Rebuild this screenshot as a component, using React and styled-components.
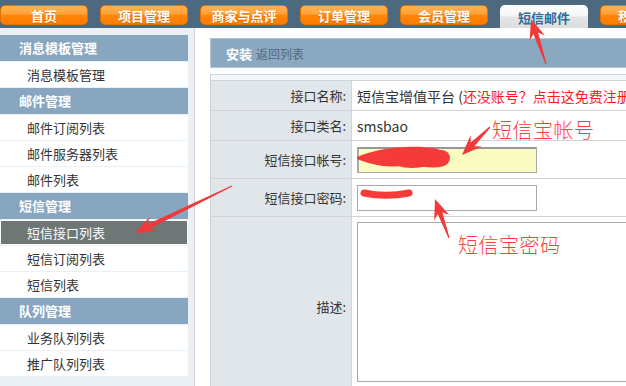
import styled, { createGlobalStyle } from "styled-components";

const GlobalStyle = createGlobalStyle`
  html, body { margin: 0; padding: 0; }
  body {
    font-family: "Noto Sans CJK SC", "Noto Sans", sans-serif;
    font-size: 13px;
    color: #333;
    background: #fff;
  }
`;

const Page = styled.div`
  position: relative;
  width: 626px;
  height: 386px;
  overflow: hidden;
  display: flex;
  flex-direction: column;
`;

const TopBar = styled.div`
  flex: none;
  height: 28px;
  box-sizing: border-box;
  padding-top: 5px;
  background: #4d697f;
  display: flex;
  align-items: flex-start;
  gap: 12px;
`;

const Tab = styled.div`
  flex: none;
  width: 88px;
  height: ${(p) => (p.$active ? "23px" : "20px")};
  box-sizing: border-box;
  border-radius: ${(p) => (p.$active ? "5px 5px 0 0" : "5px")};
  display: flex;
  align-items: center;
  justify-content: center;
  padding-top: ${(p) => (p.$active ? "2px" : "0")};
  font-size: 13px;
  font-weight: bold;
  color: ${(p) => (p.$active ? "#2d6c9c" : "#fff")};
  text-shadow: ${(p) => (p.$active ? "none" : "0 1px 1px rgba(150,60,0,0.35)")};
  background: ${(p) =>
    p.$active
      ? "linear-gradient(#ffffff 0%, #f6f6f6 45%, #e4e4e4 55%, #dedede 100%)"
      : "linear-gradient(#ffb250 0%, #ffa23a 45%, #ff8506 52%, #ff7c00 100%)"};
  border: ${(p) => (p.$active ? "none" : "1px solid #e37300")};
`;

const Main = styled.div`
  flex: 1;
  display: flex;
  min-height: 0;
`;

const Sidebar = styled.div`
  flex: none;
  width: 188px;
  padding: 7px 6px 0 0;
  background: #ebf0f5;
  border-right: 1px solid #cdd3d9;
`;

const Group = styled.div`
  margin-bottom: 1px;
`;

const GroupTitle = styled.div`
  height: 26px;
  line-height: 26px;
  padding-left: 19px;
  background: #88a6bf;
  color: #fff;
  font-weight: bold;
  font-size: 13px;
`;

const Item = styled.div`
  margin-top: 1px;
  height: 25px;
  box-sizing: border-box;
  line-height: 23px;
  padding-left: 26px;
  border: 1px solid #fff;
  background: ${(p) => (p.$active ? "#6e7676" : "#fff")};
  color: ${(p) => (p.$active ? "#fff" : "#333")};
  font-size: 13px;
`;

const Content = styled.div`
  flex: 1;
  min-width: 0;
  padding: 10px 0 0 15px;
  background: #fff;
`;

const Panel = styled.div`
  width: 520px;
`;

const PanelHeader = styled.div`
  height: 30px;
  box-sizing: border-box;
  border: 1px solid #b8c4ce;
  background: #8aa8c0;
  display: flex;
  align-items: center;
  gap: 4px;
  padding-left: 15px;
`;

const HeaderTitle = styled.span`
  color: #fff;
  font-weight: bold;
  font-size: 13px;
`;

const HeaderLink = styled.span`
  color: #4f6a82;
  font-size: 12px;
`;

const Table = styled.div`
  margin-top: 6px;
  border: 1px solid #cfd4d8;
  border-bottom: none;
`;

const TopStrip = styled.div`
  height: 5px;
  background: #f4f6f8;
  border-bottom: 1px solid #cfd4d8;
`;

const Row = styled.div`
  display: grid;
  grid-template-columns: 141px 1fr;
  box-sizing: border-box;
  height: ${(p) => p.$h}px;
  border-bottom: 1px solid #d0d4d8;
`;

const Label = styled.div`
  background: #e1e6eb;
  border-right: 1px solid #cfd4d8;
  display: flex;
  align-items: center;
  justify-content: flex-end;
  padding-right: 5px;
  font-size: 13px;
  color: #333;
`;

const Value = styled.div`
  display: flex;
  align-items: ${(p) => (p.$top ? "flex-start" : "center")};
  padding-left: 5px;
  white-space: nowrap;
  font-size: 14px;
  color: #333;
`;

const Warn = styled.span`
  color: #ff1a1a;
`;

const Field = styled.input`
  width: 180px;
  height: 26px;
  box-sizing: border-box;
  margin: 0;
  border: 1px solid #a9a9a9;
  border-top-width: ${(p) => (p.$focus ? "2px" : "1px")};
  border-left-width: ${(p) => (p.$focus ? "2px" : "1px")};
  border-top-color: ${(p) => (p.$focus ? "#999" : "#a9a9a9")};
  background: ${(p) => (p.$focus ? "#fafcc2" : "#fff")};
  outline: none;
`;

const Memo = styled.textarea`
  width: 300px;
  height: 160px;
  box-sizing: border-box;
  margin: 5px 0 0;
  border: 1px solid #aaa;
  resize: none;
  outline: none;
`;

const Overlay = styled.svg`
  position: absolute;
  left: 0;
  top: 0;
  pointer-events: none;
`;

const Note = styled.div`
  position: absolute;
  left: ${(p) => p.$x}px;
  top: ${(p) => p.$y}px;
  color: #ff3d3d;
  font-size: 20px;
  font-weight: 300;
  letter-spacing: 0.5px;
  line-height: 1;
  white-space: nowrap;
`;

const tabs = ["首页", "项目管理", "商家与点评", "订单管理", "会员管理", "短信邮件", "积分管理"];

const groups = [
  { title: "消息模板管理", items: ["消息模板管理"] },
  { title: "邮件管理", items: ["邮件订阅列表", "邮件服务器列表", "邮件列表"] },
  { title: "短信管理", items: ["短信接口列表", "短信订阅列表", "短信列表"], active: 0 },
  { title: "队列管理", items: ["业务队列列表", "推广队列列表"] },
];

// tapered screenshot-style arrow, tail -> tip
function arrow(x1, y1, x2, y2, head = 16, len = 20) {
  const dx = x2 - x1;
  const dy = y2 - y1;
  const l = Math.hypot(dx, dy);
  const ux = dx / l;
  const uy = dy / l;
  const nx = -uy;
  const ny = ux;
  const pt = (d, w) => [x2 - ux * d + nx * w, y2 - uy * d + ny * w];
  const pts = [
    [x1 + nx * 0.5, y1 + ny * 0.5],
    pt(len * 0.75, 2.5),
    pt(len, head / 2),
    [x2, y2],
    pt(len, -head / 2),
    pt(len * 0.75, -2.5),
    [x1 - nx * 0.5, y1 - ny * 0.5],
  ];
  return pts.map((p) => p.map((v) => v.toFixed(1)).join(",")).join(" ");
}

const arrows = [
  [232, 186, 135, 233],
  [546, 64, 531, 19],
  [490, 127, 462, 155],
  [449, 238, 435, 199],
];

export default function App() {
  return (
    <Page>
      <GlobalStyle />
      <TopBar>
        {tabs.map((t, i) => (
          <Tab key={t} $active={i === 5}>
            {t}
          </Tab>
        ))}
      </TopBar>
      <Main>
        <Sidebar>
          {groups.map((g) => (
            <Group key={g.title}>
              <GroupTitle>{g.title}</GroupTitle>
              {g.items.map((it, i) => (
                <Item key={it} $active={g.active === i}>
                  {it}
                </Item>
              ))}
            </Group>
          ))}
        </Sidebar>
        <Content>
          <Panel>
            <PanelHeader>
              <HeaderTitle>安装</HeaderTitle>
              <HeaderLink>返回列表</HeaderLink>
            </PanelHeader>
            <Table>
              <TopStrip />
              <Row $h={30}>
                <Label>接口名称:</Label>
                <Value>
                  短信宝增值平台 (<Warn>还没账号？点击这免费注册</Warn>)
                </Value>
              </Row>
              <Row $h={30}>
                <Label>接口类名:</Label>
                <Value>smsbao</Value>
              </Row>
              <Row $h={38}>
                <Label>短信接口帐号:</Label>
                <Value>
                  <Field $focus readOnly />
                </Value>
              </Row>
              <Row $h={38}>
                <Label>短信接口密码:</Label>
                <Value>
                  <Field readOnly />
                </Value>
              </Row>
              <Row $h={180}>
                <Label>描述:</Label>
                <Value $top>
                  <Memo readOnly />
                </Value>
              </Row>
            </Table>
          </Panel>
        </Content>
      </Main>

      <Overlay width="626" height="386" viewBox="0 0 626 386">
        <g fill="#f53a3a">
          <path d="M357 157 C 368 152, 385 148, 405 147 C 425 146, 440 148, 446 153 C 452 158, 449 166, 440 167 C 428 169, 415 164, 400 166 C 385 168, 370 164, 357 159 Z" />
          <ellipse cx="441" cy="158" rx="9" ry="8" />
          <ellipse cx="412" cy="161" rx="20" ry="7" />
        </g>
        <path
          d="M364 193 C 378 196, 394 196, 409 193"
          stroke="#f53a3a"
          strokeWidth="7"
          strokeLinecap="round"
          fill="none"
        />
        {arrows.map((a, i) => (
          <polygon key={i} points={arrow(...a)} fill="#f2393a" />
        ))}
      </Overlay>
      <Note $x={492} $y={120}>短信宝帐号</Note>
      <Note $x={458} $y={235}>短信宝密码</Note>
    </Page>
  );
}
